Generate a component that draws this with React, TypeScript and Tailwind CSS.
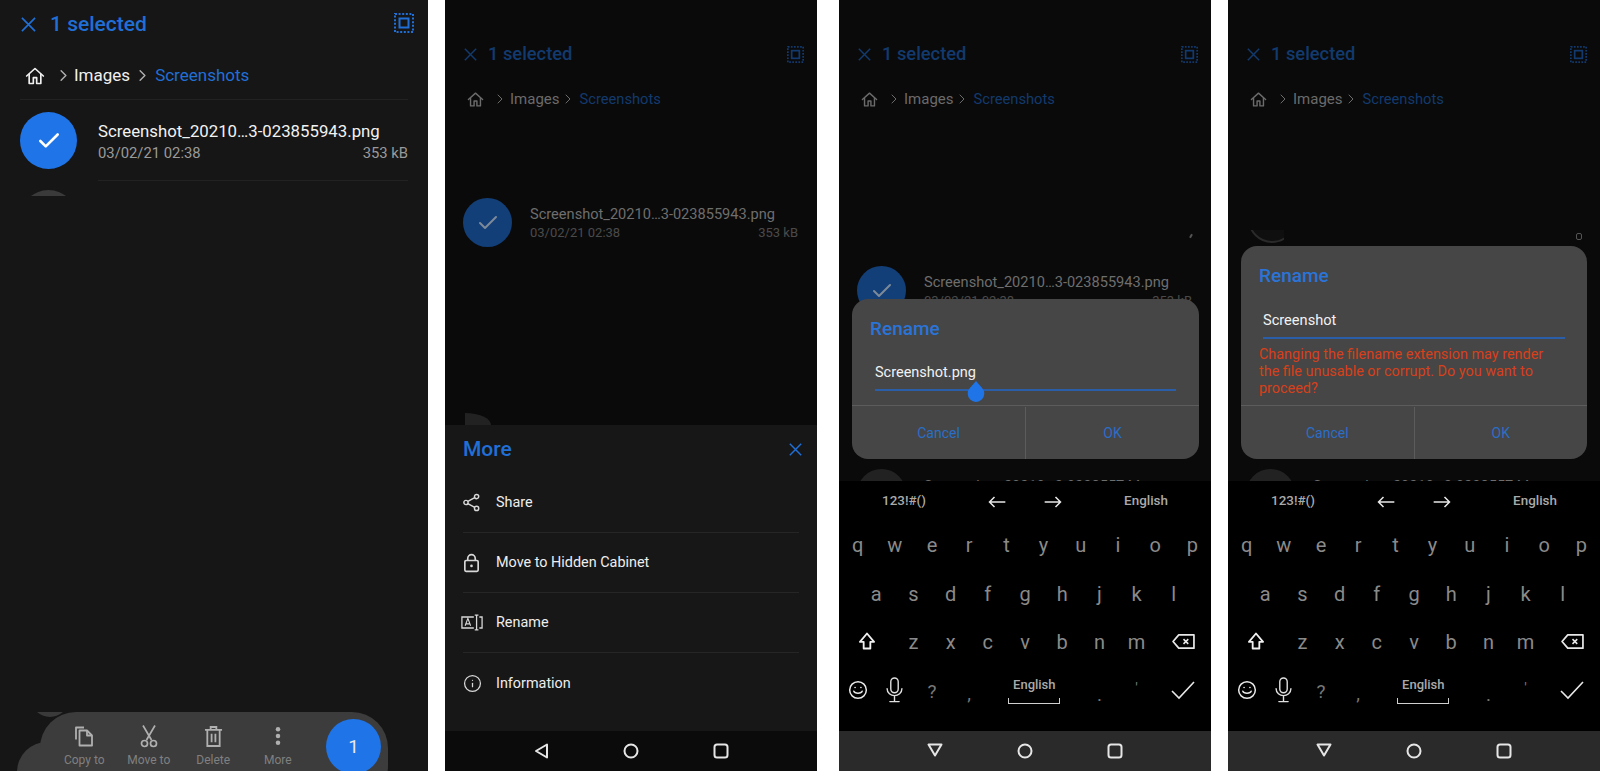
import { ReactNode } from "react";
import { ChevronRight, Check, Info } from "lucide-react";

const Close = ({ className }: { className: string }) => (
  <svg viewBox="0 0 16 16" className={className} fill="none" stroke="currentColor" strokeWidth="1.800">
    <path d="M1 1l14 14M15 1 1 15" />
  </svg>
);

const SelectAll = ({ className }: { className: string }) => (
  <svg viewBox="0 0 20 20" className={className} fill="none" stroke="currentColor">
    <rect x="1" y="1" width="18" height="18" strokeWidth="2" strokeDasharray="2 1.6" />
    <rect x="5.500" y="5.500" width="9" height="9" strokeWidth="2" />
  </svg>
);

const Home = ({ className }: { className: string }) => (
  <svg viewBox="0 0 24 24" className={className} fill="none" stroke="currentColor" strokeWidth="2" strokeLinejoin="round" strokeLinecap="round">
    <path d="M2 12 12 3l10 9" />
    <path d="M5 10v11h5v-7h4v7h5V10" />
  </svg>
);

const BackIcon = () => (
  <svg viewBox="0 0 24 24" className="h-6 w-6" fill="none" stroke="#e6e6e6" strokeWidth="2" strokeLinejoin="round">
    <path d="M18 5.500v13L7 12z" />
  </svg>
);

const DownIcon = () => (
  <svg viewBox="0 0 24 24" className="h-6 w-6 -translate-y-[1px]" fill="none" stroke="#e6e6e6" strokeWidth="2" strokeLinejoin="round">
    <path d="M5.500 6.500h13L12 17.500z" />
  </svg>
);

const NavBar = ({ down, className }: { down?: boolean; className: string }) => (
  <div className={`relative z-10 flex h-[40px] shrink-0 items-center justify-center gap-[66px] ${className}`}>
    {down ? <DownIcon /> : <BackIcon />}
    <svg viewBox="0 0 24 24" className="h-6 w-6" fill="none" stroke="#e6e6e6" strokeWidth="2">
      <circle cx="12" cy="12" r="6.500" />
    </svg>
    <svg viewBox="0 0 24 24" className="h-6 w-6" fill="none" stroke="#e6e6e6" strokeWidth="2">
      <rect x="5.500" y="5.500" width="13" height="13" rx="2.500" />
    </svg>
  </div>
);

// dimmed file list behind the sheet and the dialogs
const DimTop = () => (
  <>
    <div className="flex h-[78px] shrink-0 items-center pl-[19px] pr-[13px] pt-[30px] text-[#123a6e]">
      <Close className="h-[13px] w-[13px]" />
      <span className="ml-[11px] text-[18.300px] font-medium">1 selected</span>
      <SelectAll className="ml-auto h-[17px] w-[17px] text-[#123a6e]" />
    </div>
    <div className="flex h-[40px] shrink-0 items-center pl-[22px] pt-[2px] text-[15px] text-[#6b6b6b]">
      <Home className="h-[17px] w-[17px]" />
      <ChevronRight className="ml-[8px] h-[16px] w-[16px]" strokeWidth={1.5} />
      <span className="ml-[2px]">Images</span>
      <ChevronRight className="h-[16px] w-[16px]" strokeWidth={1.5} />
      <span className="ml-[4px] text-[14.700px] text-[#123a6e]">Screenshots</span>
    </div>
  </>
);

const DimItem = ({ className }: { className: string }) => (
  <div className={`flex shrink-0 pl-[18px] pr-[19px] ${className}`}>
    <div className="flex h-[49px] w-[49px] shrink-0 items-center justify-center rounded-full bg-[#123f78]">
      <Check className="h-[24px] w-[24px] text-[#7d8a99]" strokeWidth={2} />
    </div>
    <div className="ml-[18px] min-w-0 flex-1 pt-[6px]">
      <div className="text-[14.600px] leading-[20px] text-[#6e6e6e]">Screenshot_20210…3-023855943.png</div>
      <div className="flex justify-between text-[13px] leading-[18px] text-[#4a4a4a]">
        <span>03/02/21 02:38</span>
        <span>353 kB</span>
      </div>
    </div>
  </div>
);

// next row of the list, mostly hidden by the keyboard
const PeekItem = () => (
  <div className="absolute left-0 top-[469px] flex w-full pl-[18px]">
    <div className="h-[49px] w-[49px] shrink-0 rounded-full bg-[#222222]" />
    <div className="ml-[18px] pt-[7px] text-[14.600px] leading-[20px] text-[#6e6e6e]">Screenshot_20210…3-023855744.png</div>
  </div>
);

const Key = ({ children, className = "col-span-2" }: { children: ReactNode; className?: string }) => (
  <div className={`flex items-center justify-center ${className}`}>{children}</div>
);

const Keyboard = () => (
  <div className="relative z-10 flex h-[250px] shrink-0 flex-col bg-black text-[20px] text-[#8a8a8a]">
    <div className="grid h-[39px] grid-cols-[130px_56px_56px_130px] items-center pt-[2px] text-[13.400px] font-medium text-[#aaaaaa]">
      <span className="text-center">123!#()</span>
      <svg viewBox="0 0 24 24" className="mx-auto h-[20px] w-[20px]" fill="none" stroke="#e8e8e8" strokeWidth="1.800">
        <path d="M22 12H3M9 6l-6 6 6 6" />
      </svg>
      <svg viewBox="0 0 24 24" className="mx-auto h-[20px] w-[20px]" fill="none" stroke="#e8e8e8" strokeWidth="1.800">
        <path d="M2 12h19M15 6l6 6-6 6" />
      </svg>
      <span className="text-center">English</span>
    </div>
    <div className="grid h-[49px] grid-cols-[repeat(20,1fr)]">
      {"qwertyuiop".split("").map((k) => (
        <Key key={k}>{k}</Key>
      ))}
    </div>
    <div className="grid h-[49px] grid-cols-[repeat(20,1fr)]">
      <div />
      {"asdfghjkl".split("").map((k) => (
        <Key key={k}>{k}</Key>
      ))}
    </div>
    <div className="grid h-[48px] grid-cols-[repeat(20,1fr)]">
      <Key className="col-span-3">
        <svg viewBox="0 0 24 24" className="h-[20px] w-[20px] -translate-y-[1px]" fill="none" stroke="#f0f0f0" strokeWidth="2.200" strokeLinejoin="round">
          <path d="M12 3 3.500 13H8v8h8v-8h4.500z" />
        </svg>
      </Key>
      {"zxcvbnm".split("").map((k) => (
        <Key key={k}>{k}</Key>
      ))}
      <Key className="col-span-3">
        <svg viewBox="0 0 26 20" className="h-[19px] w-[25px] -translate-y-[1px]" fill="none" stroke="#e8e8e8" strokeWidth="1.800" strokeLinejoin="round">
          <path d="M8 3h16v14H8l-6-7z" />
          <path d="m13 7.500 5 5M18 7.500l-5 5" strokeWidth="1.600" />
        </svg>
      </Key>
    </div>
    <div className="grid h-[52px] grid-cols-[repeat(20,1fr)]">
      <Key>
        <svg viewBox="0 0 24 24" className="h-[20px] w-[20px] -translate-y-[2px]" fill="none" stroke="#e8e8e8" strokeWidth="1.800" strokeLinecap="round">
          <circle cx="12" cy="12" r="10" />
          <path d="M7 13.500c1 3 9 3 10 0" />
          <circle cx="8.500" cy="9" r="1" fill="#e8e8e8" stroke="none" />
          <circle cx="15.500" cy="9" r="1" fill="#e8e8e8" stroke="none" />
        </svg>
      </Key>
      <Key>
        <svg viewBox="0 0 20 28" className="h-[26px] w-[19px] -translate-y-[2px]" fill="none" stroke="#e0e0e0" strokeWidth="1.500" strokeLinecap="round">
          <rect x="6" y="1" width="8" height="16" rx="4" />
          <path d="M2 12.500c0 10 16 10 16 0M10 20v6M5 26.500h10" />
        </svg>
      </Key>
      <Key className="col-span-2 text-[19px] text-[#777777]">?</Key>
      <Key className="col-span-2 pt-[4px] text-[19px] text-[#777777]">,</Key>
      <Key className="col-span-5">
        <div className="flex w-[52px] -translate-y-[2px] flex-col items-center">
          <span className="text-[13px] font-medium leading-[18px] text-[#aaaaaa]">English</span>
          <div className="mt-[4px] h-[6px] w-[52px] border-x-[1.5px] border-b-[1.5px] border-[#d0d0d0]" />
        </div>
      </Key>
      <Key className="col-span-2 pt-[6px] text-[19px] text-[#777777]">.</Key>
      <Key className="col-span-2 pb-[8px] text-[15px] text-[#777777]">'</Key>
      <Key className="col-span-3">
        <svg viewBox="0 0 26 20" className="h-[20px] w-[26px] -translate-y-[2px]" fill="none" stroke="#e8e8e8" strokeWidth="1.600">
          <path d="m2 11 7 7L24 2" />
        </svg>
      </Key>
    </div>
  </div>
);

const DialogFooter = () => (
  <div className="mt-auto flex h-[54px] border-t border-[#5c5c5c] pt-[1px] text-[14px] text-[#2a6ec8]">
    <div className="flex flex-1 items-center justify-center border-r border-[#5c5c5c]">Cancel</div>
    <div className="flex flex-1 items-center justify-center">OK</div>
  </div>
);

const menuRows = [
  {
    label: "Share",
    icon: (
      <svg viewBox="0 0 20 22" className="h-[19px] w-[17px]" fill="none" stroke="#d8d8d8" strokeWidth="1.700">
        <circle cx="16" cy="4" r="2.500" />
        <circle cx="3.500" cy="11" r="2.500" />
        <circle cx="16" cy="18" r="2.500" />
        <path d="M5.700 9.800 13.800 5.300M5.700 12.200l8.100 4.500" />
      </svg>
    ),
  },
  {
    label: "Move to Hidden Cabinet",
    icon: (
      <svg viewBox="0 0 20 24" className="h-[20px] w-[17px]" fill="none" stroke="#d8d8d8" strokeWidth="2">
        <rect x="2" y="9" width="16" height="13" rx="1.500" />
        <path d="M5.500 9V6.500a4.500 4.500 0 0 1 9 0V9" />
        <circle cx="10" cy="15.500" r="1.600" fill="#d8d8d8" stroke="none" />
      </svg>
    ),
  },
  {
    label: "Rename",
    icon: (
      <svg viewBox="0 0 24 18" className="-ml-[2px] h-[17px] w-[22px] max-w-none" fill="none" stroke="#d8d8d8" strokeWidth="1.400">
        <path d="M14 3H1v12h13" />
        <path d="m4.500 12.500 3-8 3 8M5.500 10.500h4" strokeWidth="1.200" />
        <path d="M17 1v16M15 1h4M15 17h4M20 3h3v12h-3" />
      </svg>
    ),
  },
  {
    label: "Information",
    icon: <Info className="h-[19px] w-[19px] text-[#d8d8d8]" strokeWidth={1.6} />,
  },
];

const ToolButton = ({ label, children }: { label: string; children: ReactNode }) => (
  <div className="flex w-[64.500px] flex-col items-center">
    <div className="flex h-[24px] items-center justify-center text-[#b0b0b0]">{children}</div>
    <span className="mt-[4px] text-[12px] leading-[16px] text-[#808080]">{label}</span>
  </div>
);

export default function App() {
  return (
    <div className="flex h-[771px] w-[1600px] overflow-hidden bg-white font-[Roboto,sans-serif]">
      {/* File list with action bar */}
      <section className="relative flex h-full w-[428px] shrink-0 flex-col overflow-hidden bg-[#161616]">
        <header className="flex h-[49px] items-center pl-[21px] pr-[14px] text-[#206fd6]">
          <Close className="h-[15px] w-[15px]" />
          <span className="ml-[14px] text-[21px] font-medium">1 selected</span>
          <SelectAll className="ml-auto -mt-[3px] h-[20px] w-[20px]" />
        </header>
        <div className="mx-[20px] flex h-[51px] items-center border-b border-[#222222] pl-[5px] pt-[3px] text-[17px] text-[#f0f0f0]">
          <Home className="h-[20px] w-[20px]" />
          <ChevronRight className="ml-[9px] h-[19px] w-[19px] text-[#b0b0b0]" strokeWidth={1.8} />
          <span className="ml-[1px]">Images</span>
          <ChevronRight className="ml-[3px] h-[19px] w-[19px] text-[#b0b0b0]" strokeWidth={1.8} />
          <span className="ml-[3px] text-[#206fd6]">Screenshots</span>
        </div>
        <div className="flex h-[81px] items-center pl-[20px] pr-[20px]">
          <div className="flex h-[57px] w-[57px] shrink-0 items-center justify-center rounded-full bg-[#1f74e8]">
            <Check className="h-[26px] w-[26px] text-white" strokeWidth={2.4} />
          </div>
          <div className="ml-[21px] h-full min-w-0 flex-1 border-b border-[#222222] pt-[19px]">
            <div className="text-[16.800px] leading-[24px] text-[#f2f2f2]">Screenshot_20210…3-023855943.png</div>
            <div className="flex justify-between text-[14.800px] leading-[20px] text-[#9a9a9a]">
              <span>03/02/21 02:38</span>
              <span>353 kB</span>
            </div>
          </div>
        </div>
        <div className="ml-[20px] mt-[9px] h-[6px] w-[57px] overflow-hidden">
          <div className="h-[57px] w-[57px] rounded-full bg-[#3a3a3a]" />
        </div>

        {/* floating action bar */}
        <div className="absolute left-[31px] top-[712px] h-[5px] w-[38px] overflow-hidden">
          <div className="-mt-[33px] h-[38px] w-[38px] rounded-full bg-[#3a3a3a]" />
        </div>
        <div className="absolute left-[17px] top-[742px] h-[60px] w-[60px] rounded-full bg-[#3c3c3c]" />
        <div className="absolute left-[40px] top-[712px] h-[90px] w-[348px] rounded-[36px] bg-[#3c3c3c] pl-[12px] pt-[12px]">
          <div className="flex">
            <ToolButton label="Copy to">
              <svg viewBox="0 0 20 22" className="h-[22px] w-[20px]" fill="none" stroke="currentColor" strokeWidth="1.800" strokeLinejoin="round">
                <path d="M2 14.500V2.500h8" />
                <path d="M5.500 5.500H13l5 5V20.500H5.500z" />
                <path d="M13 5.500v5h5" />
              </svg>
            </ToolButton>
            <ToolButton label="Move to">
              <svg viewBox="0 0 20 24" className="h-[24px] w-[20px]" fill="none" stroke="currentColor" strokeWidth="1.700">
                <path d="M4 1.500 12.500 16M16 1.500 7.500 16" />
                <circle cx="5.500" cy="19.500" r="3" />
                <circle cx="14.500" cy="19.500" r="3" />
              </svg>
            </ToolButton>
            <ToolButton label="Delete">
              <svg viewBox="0 0 20 24" className="h-[23px] w-[19px]" fill="none" stroke="currentColor" strokeWidth="1.900">
                <path d="M1 5h18M7 5V2h6v3" />
                <path d="M3.500 5v17h13V5" />
                <path d="M8 9v9M12 9v9" />
              </svg>
            </ToolButton>
            <ToolButton label="More">
              <svg viewBox="0 0 8 22" className="h-[20px] w-[8px]" fill="currentColor">
                <circle cx="4" cy="3.500" r="2.500" />
                <circle cx="4" cy="11" r="2.500" />
                <circle cx="4" cy="18.500" r="2.500" />
              </svg>
            </ToolButton>
          </div>
          <div className="absolute left-[286px] top-[7px] flex h-[55px] w-[55px] items-center justify-center rounded-full bg-[#1f74e8] pt-[2px] text-[19px] text-[#e8e8e8]">
            1
          </div>
        </div>
      </section>

      {/* More sheet */}
      <section className="ml-[17px] flex h-full w-[372px] shrink-0 flex-col overflow-hidden bg-[#0a0a0a]">
        <DimTop />
        <DimItem className="mt-[80px]" />
        <div className="mt-auto ml-[20px] h-[12px] w-[26px] rounded-tr-[26px_12px] bg-[#222222]" />
        <div className="flex h-[306px] shrink-0 flex-col bg-[#171717] px-[18px]">
          <div className="flex h-[48px] items-center justify-between pt-[1px] text-[#206fd6]">
            <span className="text-[21px] font-medium">More</span>
            <Close className="-mr-[3px] h-[13px] w-[13px]" />
          </div>
          {menuRows.map((row, i) => (
            <div key={row.label} className={`flex h-[60px] items-center ${i < 3 ? "border-b border-[#262626]" : ""}`}>
              <div className="flex w-[33px] shrink-0">{row.icon}</div>
              <span className="pt-[1px] text-[14.400px] text-[#eeeeee]">{row.label}</span>
            </div>
          ))}
        </div>
        <NavBar className="bg-[#0b0b0b]" />
      </section>

      {/* Rename dialog */}
      <section className="ml-[22px] flex h-full w-[372px] shrink-0 flex-col overflow-hidden bg-[#0a0a0a]">
        <div className="relative flex min-h-0 flex-1 flex-col">
          <DimTop />
          <DimItem className="mt-[148px]" />
          <PeekItem />
          <div className="absolute left-[351px] top-[234px] h-[4px] w-[2px] rotate-[30deg] bg-[#555555]" />
          <div className="absolute left-[13px] top-[299px] flex h-[160px] w-[347px] flex-col overflow-hidden rounded-[16px] bg-[#464646]">
            <div className="pl-[18px] pt-[17px] text-[19px] font-medium leading-[26px] text-[#2a74d8]">Rename</div>
            <div className="relative mx-[23px] mt-[20px] h-[29px] border-b-2 border-[#2a5ea8] text-[14.500px] leading-[22px] text-[#f2f2f2]">
              Screenshot.png
              <svg viewBox="0 0 20 24" className="absolute left-[92px] top-[19px] h-[21px] w-[18px]">
                <path d="M10 0 3 8a9.500 9.500 0 1 0 14 0z" fill="#1f74e8" />
              </svg>
            </div>
            <DialogFooter />
          </div>
        </div>
        <Keyboard />
        <NavBar down className="bg-[#2a2a2a]" />
      </section>

      {/* Rename dialog with extension warning */}
      <section className="ml-[17px] flex h-full w-[372px] shrink-0 flex-col overflow-hidden bg-[#0a0a0a]">
        <div className="relative flex min-h-0 flex-1 flex-col">
          <DimTop />
          <div className="ml-[20px] mt-[112px] h-[14px] w-[36px] overflow-hidden">
            <div className="-mt-[35px] h-[48px] w-[48px] rounded-full border-2 border-[#2a2a2a] bg-[#0f0f0f]" />
          </div>
          <PeekItem />
          <div className="absolute left-[348px] top-[233px] h-[7px] w-[6px] rounded-[2px] border border-[#555555]" />
          <div className="absolute left-[13px] top-[246px] flex h-[213px] w-[346px] flex-col overflow-hidden rounded-[16px] bg-[#464646]">
            <div className="pl-[18px] pt-[17px] text-[19px] font-medium leading-[26px] text-[#2a74d8]">Rename</div>
            <div className="mx-[22px] mt-[20px] h-[30px] border-b-2 border-[#2a5ea8] text-[14.600px] leading-[22px] text-[#f2f2f2]">
              Screenshot
            </div>
            <p className="mt-[7px] pl-[18px] pr-[30px] text-[14.400px] leading-[17px] text-[#d8401a]">
              Changing the filename extension may render the file unusable or corrupt. Do you want to proceed?
            </p>
            <DialogFooter />
          </div>
        </div>
        <Keyboard />
        <NavBar down className="bg-[#2a2a2a]" />
      </section>
    </div>
  );
}
